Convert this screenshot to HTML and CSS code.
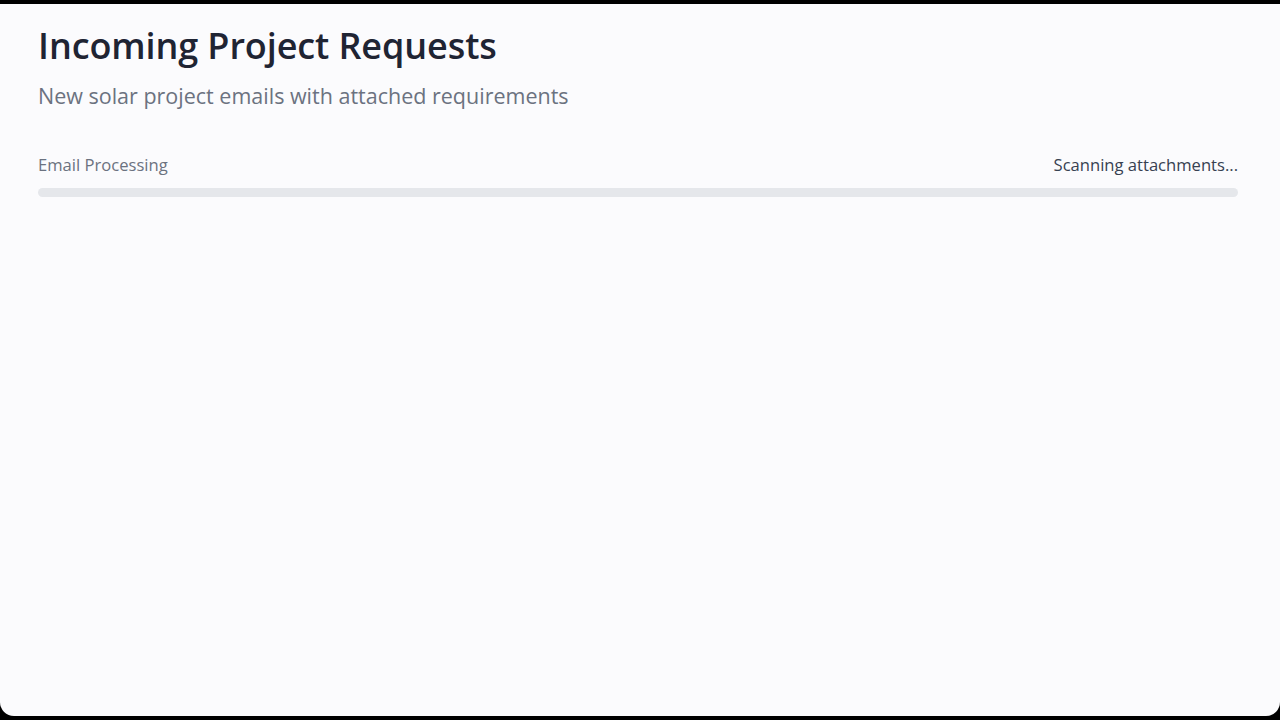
FILE: index.html
```html
<!DOCTYPE html>
<html lang="en">
<head>
<meta charset="utf-8">
<title>Incoming Project Requests</title>
<link rel="stylesheet" href="styles.css">
</head>
<body>
<div class="frame">
  <main class="page">
    <header class="header">
      <h1 class="title">Incoming Project Requests</h1>
      <p class="subtitle">New solar project emails with attached requirements</p>
    </header>
    <section class="progress">
      <div class="progress-labels">
        <span class="progress-name">Email Processing</span>
        <span class="progress-status">Scanning attachments...</span>
      </div>
      <div class="progress-track"><div class="progress-fill" style="width: 0%"></div></div>
    </section>
  </main>
</div>
</body>
</html>
```
FILE: styles.css
```css
html, body {
  margin: 0;
  padding: 0;
  height: 100%;
  background: #000;
}
body {
  font-family: "Open Sans", "Noto Sans", sans-serif;
  overflow: hidden;
}
.frame {
  margin-top: 4px;
  height: 712px;
  background: #fbfbfd;
  border-radius: 0 0 14px 14px;
}
.page {
  padding: 22px 42px 0 38px;
}
.title {
  margin: 0;
  font-size: 36px;
  font-weight: 600;
  line-height: 40px;
  color: #1f2433;
  letter-spacing: -0.1px;
}
.subtitle {
  margin: 16px 0 0;
  font-size: 21.5px;
  line-height: 28px;
  color: #6b7280;
}
.progress {
  margin-top: 44px;
}
.progress-labels {
  display: flex;
  justify-content: space-between;
  font-size: 16.6px;
  line-height: 22px;
}
.progress-name { color: #6b7280; }
.progress-status { color: #374151; }
.progress-track {
  margin-top: 12px;
  height: 9px;
  border-radius: 5px;
  background: #e5e7eb;
  overflow: hidden;
}
.progress-fill {
  height: 100%;
  background: #3b82f6;
}
```
